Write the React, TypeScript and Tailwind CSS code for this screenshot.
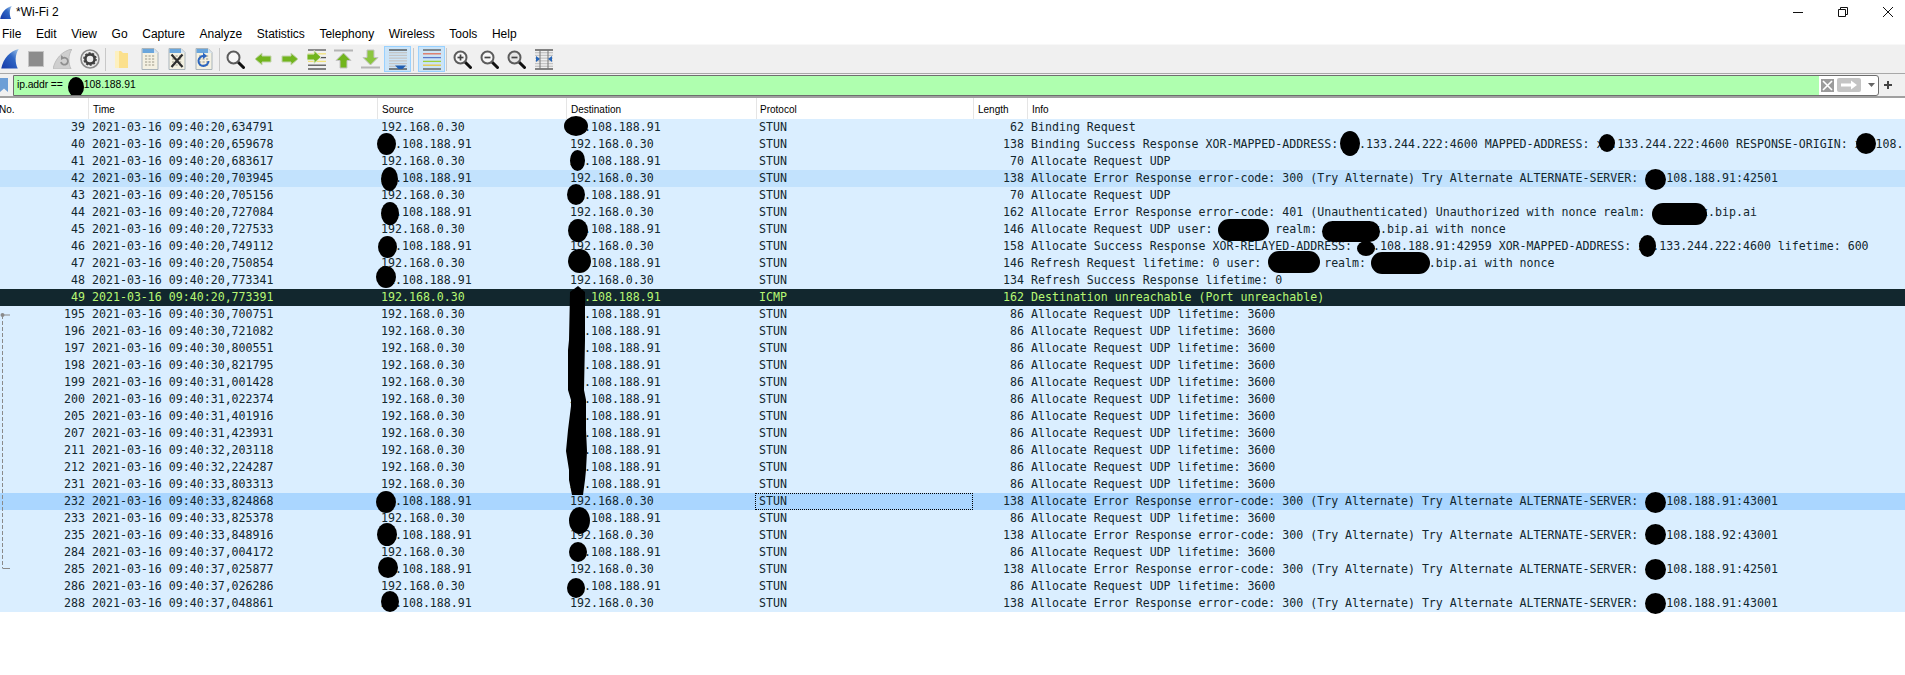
import React from "react";

const S = "192.168.0.30";
const R = "xx.108.188.91";
const REQ = "Allocate Request UDP lifetime: 3600";
const ALT = (ip: string) => `Allocate Error Response error-code: 300 (Try Alternate) Try Alternate ALTERNATE-SERVER: ${ip}`;

type Row = { no: number; time: string; out: boolean; len: number; info: string; kind?: "dark" | "soft" | "sel"; proto?: string };

const rows: Row[] = [
  { no: 39, time: "20,634791", out: true, len: 62, info: "Binding Request" },
  { no: 40, time: "20,659678", out: false, len: 138, info: "Binding Success Response XOR-MAPPED-ADDRESS: xx.133.244.222:4600 MAPPED-ADDRESS: xx.133.244.222:4600 RESPONSE-ORIGIN: xx.108." },
  { no: 41, time: "20,683617", out: true, len: 70, info: "Allocate Request UDP" },
  { no: 42, time: "20,703945", out: false, len: 138, info: ALT("xx.108.188.91:42501"), kind: "soft" },
  { no: 43, time: "20,705156", out: true, len: 70, info: "Allocate Request UDP" },
  { no: 44, time: "20,727084", out: false, len: 162, info: "Allocate Error Response error-code: 401 (Unauthenticated) Unauthorized with nonce realm: xxxxxxxx.bip.ai" },
  { no: 45, time: "20,727533", out: true, len: 146, info: "Allocate Request UDP user: xxxxxxx realm: xxxxxxxx.bip.ai with nonce" },
  { no: 46, time: "20,749112", out: false, len: 158, info: "Allocate Success Response XOR-RELAYED-ADDRESS: xx.108.188.91:42959 XOR-MAPPED-ADDRESS: xx.133.244.222:4600 lifetime: 600" },
  { no: 47, time: "20,750854", out: true, len: 146, info: "Refresh Request lifetime: 0 user: xxxxxxx realm: xxxxxxxx.bip.ai with nonce" },
  { no: 48, time: "20,773341", out: false, len: 134, info: "Refresh Success Response lifetime: 0" },
  { no: 49, time: "20,773391", out: true, len: 162, info: "Destination unreachable (Port unreachable)", kind: "dark", proto: "ICMP" },
  { no: 195, time: "30,700751", out: true, len: 86, info: REQ },
  { no: 196, time: "30,721082", out: true, len: 86, info: REQ },
  { no: 197, time: "30,800551", out: true, len: 86, info: REQ },
  { no: 198, time: "30,821795", out: true, len: 86, info: REQ },
  { no: 199, time: "31,001428", out: true, len: 86, info: REQ },
  { no: 200, time: "31,022374", out: true, len: 86, info: REQ },
  { no: 205, time: "31,401916", out: true, len: 86, info: REQ },
  { no: 207, time: "31,423931", out: true, len: 86, info: REQ },
  { no: 211, time: "32,203118", out: true, len: 86, info: REQ },
  { no: 212, time: "32,224287", out: true, len: 86, info: REQ },
  { no: 231, time: "33,803313", out: true, len: 86, info: REQ },
  { no: 232, time: "33,824868", out: false, len: 138, info: ALT("xx.108.188.91:43001"), kind: "sel" },
  { no: 233, time: "33,825378", out: true, len: 86, info: REQ },
  { no: 235, time: "33,848916", out: false, len: 138, info: ALT("xx.108.188.92:43001") },
  { no: 284, time: "37,004172", out: true, len: 86, info: REQ },
  { no: 285, time: "37,025877", out: false, len: 138, info: ALT("xx.108.188.91:42501") },
  { no: 286, time: "37,026286", out: true, len: 86, info: REQ },
  { no: 288, time: "37,048861", out: false, len: 138, info: ALT("xx.108.188.91:43001") },
];

const OVAL = "rounded-[50%]";
const WIDE = "rounded-[11px]";

const blots: Record<number, string[]> = {
  39: [`${OVAL} left-[564px] -top-[3px] w-[24px] h-[20px]`],
  40: [`${OVAL} left-[377px] -top-[3px] w-[19px] h-[22px]`, `${OVAL} left-[1340px] -top-[5px] w-[20px] h-[25px]`, `${OVAL} left-[1599px] -top-[2px] w-[16px] h-[18px]`, `${OVAL} left-[1856px] -top-[3px] w-[20px] h-[21px]`],
  41: [`${OVAL} left-[570px] -top-[3px] w-[15px] h-[21px]`],
  42: [`${OVAL} left-[381px] -top-[3px] w-[17px] h-[24px]`, `${OVAL} left-[1645px] -top-[1px] w-[21px] h-[21px]`],
  43: [`${OVAL} left-[567px] -top-[3px] w-[18px] h-[21px]`],
  44: [`${OVAL} left-[381px] -top-[2px] w-[18px] h-[23px]`, `${WIDE} left-[1652px] -top-[1px] w-[55px] h-[22px]`],
  45: [`${OVAL} left-[568px] -top-[2px] w-[20px] h-[23px]`, `${WIDE} left-[1218px] -top-[2px] w-[51px] h-[22px]`, `${WIDE} left-[1322px] top-0 w-[58px] h-[21px]`],
  46: [`${OVAL} left-[378px] -top-[2px] w-[19px] h-[22px]`, `${OVAL} left-[1357px] top-[3px] w-[18px] h-[15px]`, `${OVAL} left-[1639px] -top-[3px] w-[17px] h-[22px]`],
  47: [`${OVAL} left-[568px] -top-[6px] w-[23px] h-[24px]`, `${WIDE} left-[1268px] -top-[4px] w-[52px] h-[22px]`, `${WIDE} left-[1371px] -top-[3px] w-[59px] h-[22px]`],
  48: [`${OVAL} left-[376px] -top-[6px] w-[20px] h-[22px]`],
  232: [`${OVAL} left-[376px] -top-[2px] w-[20px] h-[22px]`, `${OVAL} left-[1645px] -top-[1px] w-[21px] h-[21px]`],
  233: [`${OVAL} left-[569px] -top-[3px] w-[21px] h-[27px]`],
  235: [`${OVAL} left-[377px] -top-[4px] w-[20px] h-[23px]`, `${OVAL} left-[1645px] -top-[3px] w-[21px] h-[21px]`],
  284: [`${OVAL} left-[569px] -top-[2px] w-[18px] h-[20px]`],
  285: [`${OVAL} left-[378px] -top-[4px] w-[20px] h-[21px]`, `${OVAL} left-[1645px] -top-[2px] w-[21px] h-[21px]`],
  286: [`${OVAL} left-[567px] top-0 w-[18px] h-[20px]`],
  288: [`${OVAL} left-[381px] -top-[4px] w-[18px] h-[21px]`, `${OVAL} left-[1645px] -top-[2px] w-[21px] h-[21px]`],
};

const GRID = "grid grid-cols-[88px_289px_189px_190px_217px_54px_1fr]";

function Fin({ id, size = 18 }: { id: string; size?: number }) {
  return (
    <svg width={size} height={size * 1.08} viewBox="0 0 18 20">
      <defs>
        <linearGradient id={id} x1="0" y1="1" x2="1" y2="0">
          <stop offset="0" stopColor="#1438a8" />
          <stop offset="0.6" stopColor="#2f66c4" />
          <stop offset="1" stopColor="#a5c8ea" />
        </linearGradient>
      </defs>
      <path d="M0 20C2 10 9 2 18 0C14 6 14 14 17 20Z" fill={`url(#${id})`} />
    </svg>
  );
}

function Page({ children }: { children?: React.ReactNode }) {
  return (
    <svg width="18" height="22" viewBox="0 0 18 22">
      <path d="M1 .5H13L17 4.5V21.5H1Z" fill="#f4f1e2" stroke="#a9b4bb" />
      <path d="M1.5 1H13V5H1.5Z" fill="#6aa6dc" />
      <path d="M13 1L17 5H13Z" fill="#d8e6f2" />
      {[8, 11, 14, 17].map((y) => (
        <path key={y} d={`M4 ${y}H14`} stroke="#b8b5a5" strokeWidth="1.6" strokeDasharray="2.2 1.3" />
      ))}
      {children}
    </svg>
  );
}

function Glass({ sign, dim }: { sign?: "+" | "-"; dim?: boolean }) {
  return (
    <svg width="19" height="19" viewBox="0 0 19 19">
      <path d="M11.5 11.5L17.5 17.5" stroke="#111" strokeWidth="3" strokeLinecap="round" />
      <circle cx="7.5" cy="7.5" r="6" fill={dim ? "#e6e6e6" : "#f7f7f7"} stroke="#5c5c5c" strokeWidth="2" />
      {sign && <path d="M4.5 7.5H10.5" stroke="#444" strokeWidth="1.7" />}
      {sign === "+" && <path d="M7.5 4.5V10.5" stroke="#444" strokeWidth="1.7" />}
    </svg>
  );
}

function Arrow({ flip }: { flip?: boolean }) {
  return (
    <svg width="18" height="14" viewBox="0 0 18 14" className={flip ? "-scale-x-100" : ""}>
      <path d="M1 7L8 1V4H17V10H8V13Z" fill="#72b51e" stroke="#c3d4ae" strokeLinejoin="round" />
    </svg>
  );
}

function Lines({ colors, children }: { colors: string[]; children?: React.ReactNode }) {
  const step = 19 / (colors.length - 1);
  return (
    <svg width="20" height="21" viewBox="0 0 20 21">
      {colors.map((c, i) => (
        <path key={i} d={`M1 ${1 + i * step}H19`} stroke={c} strokeWidth="1.3" />
      ))}
      {children}
    </svg>
  );
}

const gl = ["#444", "#c4c4c4", "#c4c4c4", "#c4c4c4", "#c4c4c4", "#c4c4c4", "#c4c4c4", "#444"];

const Tool = ({ children, on, className = "" }: { children: React.ReactNode; on?: boolean; className?: string }) => (
  <div className={`w-[27px] h-[26px] flex items-center justify-center shrink-0 border ${on ? "bg-[#cce4f7] border-[#99d1ff]" : "border-transparent"} ${className}`}>
    {children}
  </div>
);
const Sep = ({ className = "" }: { className?: string }) => (
  <div className={`w-px h-[23px] bg-[#c8c8c8] mx-[2px] shrink-0 ${className}`} />
);

function Toolbar() {
  return (
    <div className="h-[30px] bg-[#f0f0f0] border-t border-[#f8f8f8] border-b border-b-[#a8a8a8] flex items-center shrink-0">
      <div className="w-[22px] pl-px flex items-center shrink-0"><Fin id="fin-tool" /></div>
      <Tool>
        <div className="w-[16px] h-[16px] bg-[#8c8c8c] border border-[#c4c4c4]" />
      </Tool>
      <Tool>
        <svg width="19" height="20" viewBox="0 0 19 20">
          <path d="M0 20C2 10 9 2 19 0C15 6 15 14 18 20Z" fill="#cfcfcf" stroke="#bdbdbd" />
          <path d="M8 13A3.5 3.5 0 1 0 10 9" fill="none" stroke="#8f8f8f" strokeWidth="1.8" />
          <path d="M8 6L11.5 9L8 11Z" fill="#8f8f8f" />
        </svg>
      </Tool>
      <Tool>
        <svg width="20" height="20" viewBox="0 0 20 20">
          <circle cx="10" cy="10" r="9" fill="#ececec" stroke="#8b8b8b" strokeWidth="1.6" />
          <circle cx="10" cy="10" r="4.6" fill="none" stroke="#3e3e3e" strokeWidth="2.6" />
          <circle cx="10" cy="10" r="6.1" fill="none" stroke="#3e3e3e" strokeWidth="1.4" strokeDasharray="2 1.8" />
        </svg>
      </Tool>
      <Sep />
      <Tool>
        <svg width="13" height="19" viewBox="0 0 13 19">
          <path d="M0 1H6L8 3H13V18H0Z" fill="#fbe08d" />
          <path d="M0 1H4V18H0Z" fill="#fdf0bf" />
        </svg>
      </Tool>
      <Tool className="ml-[1px]"><Page /></Tool>
      <Tool>
        <Page>
          <path d="M3.5 6.5L14.5 19M14.5 6.5L3.5 19" stroke="#2e2e2e" strokeWidth="2.2" />
        </Page>
      </Tool>
      <Tool>
        <Page>
          <path d="M13.5 13A5 5 0 1 1 9 8" fill="none" stroke="#2c66c0" strokeWidth="2" />
          <path d="M8 4.5L12 8L8 11Z" fill="#2c66c0" />
        </Page>
      </Tool>
      <Sep />
      <Tool><Glass /></Tool>
      <Tool><Arrow /></Tool>
      <Tool><Arrow flip /></Tool>
      <Tool>
        <Lines colors={["#555", "#f2e27a", "#555", "#f2e27a", "#555", "#444"]}>
          <path d="M0 5H7V1.5L14 8L7 14.500V11H0Z" fill="#72b51e" stroke="#dfe9cf" />
        </Lines>
      </Tool>
      <Tool>
        <svg width="19" height="20" viewBox="0 0 19 20">
          <path d="M0 1.500H19" stroke="#b5b5b5" strokeWidth="2" />
          <path d="M9.500 4L17 11.500H13V19H6V11.500H2Z" fill="#72b51e" stroke="#c4c4c4" />
        </svg>
      </Tool>
      <Tool>
        <svg width="19" height="20" viewBox="0 0 19 20">
          <path d="M0 18.500H19" stroke="#b5b5b5" strokeWidth="2" />
          <path d="M9.500 16L17 8.500H13V1H6V8.500H2Z" fill="#8cc63f" stroke="#c4c4c4" />
        </svg>
      </Tool>
      <Tool on>
        <Lines colors={gl}>
          <path d="M7 16.500H18L14.500 20H10.500Z" fill="#1f5fb4" />
          <path d="M11 18.500H14" stroke="#1f5fb4" strokeWidth="2" />
        </Lines>
      </Tool>
      <Sep />
      <Tool on className="ml-[2px]">
        <Lines colors={["#555", "#e0705a", "#5a78c8", "#9ad13a", "#e8c840", "#555"]} />
      </Tool>
      <Sep className="ml-[1px]" />
      <Tool><Glass sign="+" /></Tool>
      <Tool><Glass sign="-" /></Tool>
      <Tool><Glass sign="-" dim /></Tool>
      <Tool>
        <Lines colors={gl}>
          <path d="M6 1V20M14 1V20" stroke="#777" strokeWidth="1" />
          <path d="M2 7L6 10L2 13Z" fill="#2766b8" />
          <path d="M18 7L14 10L18 13Z" fill="#2766b8" />
        </Lines>
      </Tool>
    </div>
  );
}

function FilterBar() {
  return (
    <div className="h-[24px] bg-[#f0f0f0] border-b-2 border-[#a0a0a0] flex items-center shrink-0 font-['Liberation_Sans',sans-serif]">
      <div className="w-[13px] h-full flex items-center shrink-0">
        <svg width="8" height="14" viewBox="0 0 8 14"><path d="M0 0H8V14L4 10.500L0 14Z" fill="#6d9ed6" /></svg>
      </div>
      <div className="h-[21px] w-[1866px] border border-[#6e6e6e] rounded-r-[3px] bg-white flex items-center overflow-hidden">
        <div className="h-full w-[1805px] bg-[#afffaf] pl-[3px] flex items-center text-[10.4px] text-black whitespace-pre">
          <span className="tracking-[-0.1px]">ip.addr ==</span>
          <span className="relative w-[21px] h-full">
            <span className="absolute left-[5px] top-[1px] w-[16px] h-[20px] rounded-[50%] bg-black" />
          </span>
          <span>108.188.91</span>
        </div>
        <div className="ml-[2px] w-[13px] h-[13px] bg-[#9b9b9b] flex items-center justify-center">
          <svg width="11" height="11" viewBox="0 0 11 11"><path d="M1 1L10 10M10 1L1 10" stroke="#fff" strokeWidth="1.600" /></svg>
        </div>
        <div className="ml-[3px] w-[24px] h-[14px] bg-[#c4c4c4] rounded-[2px] flex items-center justify-center">
          <svg width="18" height="10" viewBox="0 0 18 10"><path d="M1 3.500H11V0.500L17 5L11 9.500V6.500H1Z" fill="#fff" /></svg>
        </div>
        <svg width="7" height="4" viewBox="0 0 7 4" className="ml-[7px]"><path d="M0 0H7L3.500 4Z" fill="#666" /></svg>
      </div>
      <div className="ml-[5px] w-[10px] h-[10px] relative shrink-0">
        <div className="absolute left-0 top-[4px] w-[8px] h-[2px] bg-[#444]" />
        <div className="absolute left-[3px] top-[1px] w-[2px] h-[8px] bg-[#444]" />
      </div>
    </div>
  );
}

const heads = ["No.", "Time", "Source", "Destination", "Protocol", "Length", "Info"];

export default function App() {
  return (
    <div className="w-[1905px] h-[675px] bg-white overflow-hidden flex flex-col font-['Liberation_Sans',sans-serif] text-black">
      <div className="h-[24px] flex items-center shrink-0 text-[12px]">
        <div className="w-[16px] overflow-hidden pt-px"><Fin id="fin-title" size={12} /></div>
        <span>*Wi-Fi 2</span>
        <div className="ml-auto flex -mr-[5px]">
          <div className="w-[45px] h-[20px] flex items-center justify-center">
            <svg width="10" height="10" viewBox="0 0 10 10"><path d="M0 5.500H10" stroke="#111" /></svg>
          </div>
          <div className="w-[45px] h-[20px] flex items-center justify-center">
            <svg width="10" height="10" viewBox="0 0 10 10"><path d="M.5 2.500H7.500V9.500H.5ZM2.500 2.500V.5H9.500V7.500H7.500" fill="none" stroke="#111" /></svg>
          </div>
          <div className="w-[45px] h-[20px] flex items-center justify-center">
            <svg width="10" height="10" viewBox="0 0 10 10"><path d="M0 0L10 10M10 0L0 10" stroke="#111" /></svg>
          </div>
        </div>
      </div>
      <div className="h-[20px] flex items-center gap-[14.6px] pl-[2px] shrink-0 text-[12px]">
        {["File", "Edit", "View", "Go", "Capture", "Analyze", "Statistics", "Telephony", "Wireless", "Tools", "Help"].map((m) => (
          <span key={m}>{m}</span>
        ))}
      </div>
      <Toolbar />
      <FilterBar />
      <div className={`${GRID} h-[21px] shrink-0 text-[10px]`}>
        {heads.map((h, i) => (
          <div key={h} className={`h-full flex items-center pt-[2px] ${i === 0 ? "-ml-px" : i === 4 ? "pl-[3px] border-l border-[#e5e5e5]" : "pl-[4px] border-l border-[#e5e5e5]"}`}>{h}</div>
        ))}
      </div>
      <div className="relative font-['DejaVu_Sans_Mono',monospace] text-[11.6px] leading-[17px]">
        {rows.map((r) => {
          const tone =
            r.kind === "dark" ? "bg-[#12272e] text-[#b7f774]" :
            r.kind === "sel" ? "bg-[#aad6ff] text-[#12272e]" :
            r.kind === "soft" ? "bg-[#c2e2fd] text-[#12272e]" : "bg-[#daeeff] text-[#12272e]";
          return (
            <div key={r.no} className={`${GRID} ${tone} relative h-[17px] whitespace-pre`}>
              <div className="text-right pr-[3px]">{r.no}</div>
              <div className="pl-[4px]">2021-03-16 09:40:{r.time}</div>
              <div className="pl-[4px]">{r.out ? S : R}</div>
              <div className="pl-[4px]">{r.out ? R : S}</div>
              <div className={`pl-[3px] ${r.kind === "sel" ? "border border-dotted border-black h-[17px] -ml-px leading-[15px]" : ""}`}>{r.proto ?? "STUN"}</div>
              <div className="text-right pr-[3px]">{r.len}</div>
              <div className="pl-[4px]">{r.info}</div>
              {(blots[r.no] ?? []).map((c) => (
                <div key={c} className={`absolute z-10 bg-black ${c}`} />
              ))}
            </div>
          );
        })}
        <svg width="22" height="210" viewBox="0 0 22 210" className="absolute z-10 left-[566px] top-[167px]">
          <path d="M12 0L19 6L19 54L18 104L20 114L20 144L21 165L20 184L19 194L17 209L6 209L3 194L3 184L0 165L2 144L5 120L5 114L2 104L2 64L3 54L4 6Z" fill="#000" />
        </svg>
        <svg width="12" height="260" viewBox="0 0 12 260" className="absolute z-10 left-0 top-[193px]">
          <circle cx="2.500" cy="3" r="2" fill="#8a8a8a" />
          <path d="M2.500 3H10" stroke="#8a8a8a" />
          <path d="M2.500 3V256" stroke="#8a8a8a" strokeDasharray="4 2" />
          <path d="M2.500 256.500H10" stroke="#8a8a8a" />
        </svg>
      </div>
    </div>
  );
}
